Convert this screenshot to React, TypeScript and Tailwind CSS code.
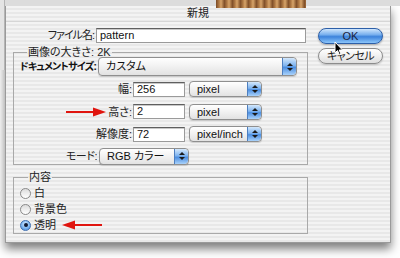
import React from "react";

const font = "font-['Liberation_Sans','Noto_Sans_CJK_JP',sans-serif] [font-feature-settings:'palt']";
const stripes =
  "bg-[repeating-linear-gradient(180deg,#f3f3f3_0px,#f3f3f3_2px,#e8e8e8_2px,#e8e8e8_4px)]";

function Stepper() {
  return (
    <div className="flex h-full w-[14px] flex-col items-center justify-center gap-[2px] rounded-r-[4px] border-l border-[#4d7fc0] bg-[linear-gradient(180deg,#d4e8fc_0%,#7db3ef_45%,#4c8ee0_55%,#a9d2fb_100%)]">
      <svg width="6" height="3" viewBox="0 0 6 3">
        <polygon points="0,3 3,0 6,3" fill="#1a1a1a" />
      </svg>
      <svg width="6" height="3" viewBox="0 0 6 3">
        <polygon points="0,0 6,0 3,3" fill="#1a1a1a" />
      </svg>
    </div>
  );
}

function Popup({ label, w, h }: { label: string; w: string; h: string }) {
  return (
    <div
      className={`${w} ${h} flex items-stretch overflow-hidden rounded-[4px] border border-[#8f8f8f] bg-[linear-gradient(180deg,#ffffff_0%,#f1f1f1_50%,#e2e2e2_100%)] shadow-[0_1px_1px_rgba(0,0,0,0.15)]`}
    >
      <span className="flex flex-1 items-center whitespace-nowrap pl-[7px] text-[11px] text-[#111]">{label}</span>
      <Stepper />
    </div>
  );
}

function Field({ value, w }: { value: string; w: string }) {
  return (
    <div
      className={`${w} flex h-[15px] items-center border border-[#9a9a9a] border-t-[#5f5f5f] bg-white pl-[3px] text-[11px] leading-none text-[#111] shadow-[inset_0_1px_0_#c8c8c8]`}
    >
      {value}
    </div>
  );
}

function RedArrow({ dir }: { dir: "left" | "right" }) {
  return (
    <svg width="40" height="10" viewBox="0 0 40 10">
      {dir === "right" ? (
        <>
          <line x1="0" y1="5" x2="30" y2="5" stroke="#e0150f" strokeWidth="2" />
          <polygon points="27,0.5 40,5 27,9.5" fill="#e0150f" />
        </>
      ) : (
        <>
          <line x1="10" y1="5" x2="40" y2="5" stroke="#e0150f" strokeWidth="2" />
          <polygon points="13,0.5 0,5 13,9.5" fill="#e0150f" />
        </>
      )}
    </svg>
  );
}

function Radio({ label, checked }: { label: string; checked?: boolean }) {
  return (
    <div className="flex h-[16px] items-center gap-[3px]">
      {checked ? (
        <div className="flex h-[11px] w-[11px] items-center justify-center rounded-full border border-[#3f6fb0] bg-[radial-gradient(circle_at_50%_35%,#d9ecff_0%,#7fb6f0_55%,#3e7fd3_100%)]">
          <div className="h-[4px] w-[4px] rounded-full bg-[#101830]" />
        </div>
      ) : (
        <div className="h-[11px] w-[11px] rounded-full border border-[#8a8a8a] bg-[linear-gradient(180deg,#dcdcdc_0%,#ffffff_100%)]" />
      )}
      <span className="text-[11px] text-[#222]">{label}</span>
    </div>
  );
}

export default function App() {
  return (
    <div className={`relative h-[258px] w-[400px] overflow-hidden bg-white ${font}`}>
      {/* desktop behind the dialog */}
      <div className="absolute left-0 top-0 h-[6px] w-[400px] bg-[#dcdcdc]" />
      <div className="absolute left-0 top-0 h-[70px] w-[5px] border-r border-[#b5b5b5] bg-[#e4e4e4]" />
      <div className="absolute left-[216px] top-0 h-[8px] w-[90px] bg-[repeating-linear-gradient(90deg,#7a4a26_0px,#b07a45_3px,#d7a46a_5px,#8b5a30_8px)]" />

      {/* dialog window */}
      <div className="pl-[5px] pt-[5px]">
        <div
          className={`flex h-[238px] w-[386px] flex-col border border-[#9a9a9a] ${stripes} shadow-[0_6px_9px_rgba(0,0,0,0.5)]`}
        >
          <div className="flex h-[16px] items-center justify-center border-b border-[#d6d6d6] text-[11px] text-[#222]">
            新規
          </div>

          <div className="flex gap-[10px] pl-[7px] pt-[6px]">
            {/* left column */}
            <div className="flex w-[295px] flex-col">
              <div className="flex h-[15px] items-center">
                <span className="w-[83px] whitespace-nowrap pr-[2px] text-right text-[11px] tracking-[-1px] text-[#222]">ファイル名:</span>
                <Field value="pattern" w="w-[210px]" />
              </div>

              <fieldset className="mt-[3px] h-[119px] border border-[#a9a9a9]">
                <legend className="ml-[13px] px-[1px] text-[11px] leading-[13px] text-[#222]">画像の大きさ: 2K</legend>
                <div className="-mt-[2px] flex flex-col">
                  <div className="flex items-center">
                    <span className="w-[84px] whitespace-nowrap pr-[2px] text-right text-[10px] font-bold tracking-[-0.8px] text-[#111]">ドキュメントサイズ:</span>
                    <Popup label="カスタム" w="w-[199px]" h="h-[19px]" />
                  </div>
                  {[
                    ["幅:", "256", "pixel", "mt-[5px]"],
                    ["高さ:", "2", "pixel", "mt-[6px]"],
                    ["解像度:", "72", "pixel/inch", "mt-[6px]"],
                  ].map(([l, v, u, m]) => (
                    <div key={l} className={`flex items-center ${m}`}>
                      <div className="flex w-[119px] items-center justify-end gap-[2px] pr-[1px]">
                        {l === "高さ:" && <RedArrow dir="right" />}
                        <span className="text-[11px] text-[#222]">{l}</span>
                      </div>
                      <Field value={v} w="w-[52px]" />
                      <div className="ml-[4px]">
                        <Popup label={u} w="w-[73px]" h="h-[16px]" />
                      </div>
                    </div>
                  ))}
                  <div className="mt-[5px] flex items-center">
                    <span className="w-[85px] whitespace-nowrap pr-[2px] text-right text-[11px] tracking-[-0.5px] text-[#222]">モード:</span>
                    <Popup label="RGB カラー" w="w-[90px]" h="h-[17px]" />
                  </div>
                </div>
              </fieldset>

              <fieldset className="mt-[6px] h-[63px] border border-[#a9a9a9] pl-[6px]">
                <legend className="ml-[8px] px-[1px] text-[11px] leading-[13px] text-[#222]">内容</legend>
                <div className="flex flex-col pt-[1px]">
                  <Radio label="白" />
                  <Radio label="背景色" />
                  <div className="flex items-center gap-[6px]">
                    <Radio label="透明" checked />
                    <RedArrow dir="left" />
                  </div>
                </div>
              </fieldset>
            </div>

            {/* buttons */}
            <div className="flex flex-col gap-[4px]">
              <div className="flex h-[16px] w-[65px] items-center justify-center rounded-full border border-[#2d5fa8] bg-[linear-gradient(180deg,#cfe6fd_0%,#79b0ee_40%,#3d83dc_55%,#8cc6fb_100%)] text-[11px] text-[#1a2440] shadow-[0_1px_2px_rgba(0,0,0,0.3)]">
                OK
              </div>
              <div className="flex h-[16px] w-[65px] items-center justify-center rounded-full border border-[#8c8c8c] bg-[linear-gradient(180deg,#ffffff_0%,#f0f0f0_50%,#dedede_100%)] text-[11px] tracking-[-0.5px] text-[#222] shadow-[0_1px_2px_rgba(0,0,0,0.2)]">
                キャンセル
              </div>
            </div>
          </div>
        </div>
      </div>

      {/* mouse pointer */}
      <svg className="absolute left-[334px] top-[41px]" width="10" height="15" viewBox="0 0 10 15">
        <polygon points="1,1 1,12 3.5,9.5 5.5,14 7,13.3 5.2,9 8.5,9" fill="#000" stroke="#fff" strokeWidth="1" />
      </svg>
    </div>
  );
}
